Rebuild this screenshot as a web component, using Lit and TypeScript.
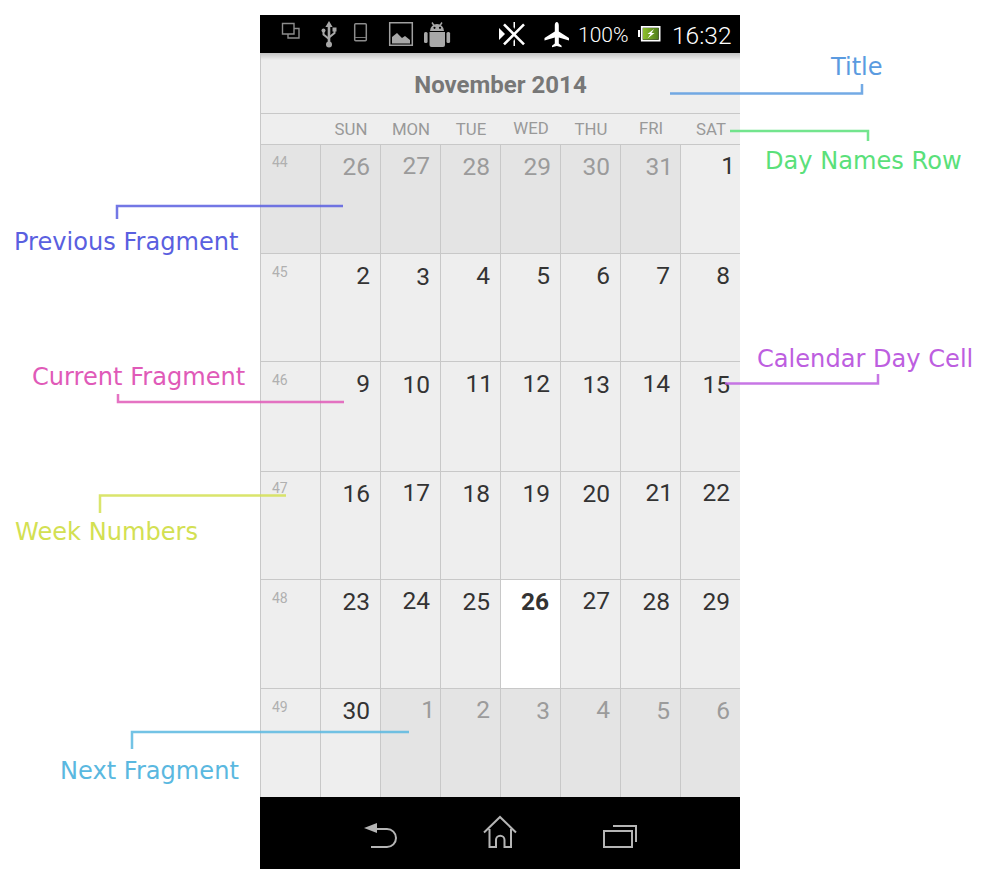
import { LitElement, html, css, svg } from "lit";
import { customElement } from "lit/decorators.js";

type Day = { n: number; other?: boolean; today?: boolean; dy?: number; dx?: number };

const names = [
  ["SUN", 0],
  ["MON", 0],
  ["TUE", 0],
  ["WED", -1],
  ["THU", 0],
  ["FRI", -1],
  ["SAT", 0],
] as const;

// week number, then seven days; dx/dy are the small shifts seen in the picture
const weeks: { no: number; dy?: number; shaded?: boolean; days: Day[] }[] = [
  {
    no: 44,
    dy: -1,
    shaded: true,
    days: [
      { n: 26, other: true },
      { n: 27, other: true, dy: -1 },
      { n: 28, other: true },
      { n: 29, other: true, dx: 1 },
      { n: 30, other: true },
      { n: 31, other: true },
      { n: 1, dy: -1, dx: 2 },
    ],
  },
  {
    no: 45,
    days: [
      { n: 2 },
      { n: 3, dy: 1 },
      { n: 4 },
      { n: 5 },
      { n: 6 },
      { n: 7 },
      { n: 8 },
    ],
  },
  {
    no: 46,
    days: [
      { n: 9 },
      { n: 10, dy: 1 },
      { n: 11 },
      { n: 12 },
      { n: 13, dy: 1 },
      { n: 14 },
      { n: 15, dy: 1 },
    ],
  },
  {
    no: 47,
    dy: -2,
    days: [
      { n: 16 },
      { n: 17, dy: -1 },
      { n: 18 },
      { n: 19 },
      { n: 20 },
      { n: 21, dy: -1 },
      { n: 22, dy: -1 },
    ],
  },
  {
    no: 48,
    days: [
      { n: 23 },
      { n: 24, dy: -1 },
      { n: 25 },
      { n: 26, today: true, dx: -1 },
      { n: 27, dy: -1 },
      { n: 28 },
      { n: 29 },
    ],
  },
  {
    no: 49,
    days: [
      { n: 30 },
      { n: 1, other: true, dy: -1, dx: 2 },
      { n: 2, other: true, dy: -1 },
      { n: 3, other: true },
      { n: 4, other: true, dy: -1 },
      { n: 5, other: true },
      { n: 6, other: true },
    ],
  },
];

const notes = [
  { text: "Title", x: 831, y: 53, color: "#5b9be0", line: "670,93.5 862,93.5 862,84" },
  { text: "Day Names Row", x: 765, y: 147, color: "#5ae07a", line: "730,131 868,131 868,141" },
  { text: "Previous Fragment", x: 14, y: 228, color: "#5a5fe0", line: "117,219 117,206 343,206" },
  { text: "Calendar Day Cell", x: 757, y: 345, color: "#bd5ee0", line: "725,383.5 878,383.5 878,374" },
  { text: "Current Fragment", x: 32, y: 363, color: "#e05ab8", line: "118,394 118,402 344,402" },
  { text: "Week Numbers", x: 15, y: 518, color: "#d3e052", line: "100,513 100,495.5 286,495.5" },
  { text: "Next Fragment", x: 60, y: 757, color: "#5ab8e0", line: "132,749 132,732 409,732" },
];

@customElement("app-root")
export class AppRoot extends LitElement {
  static styles = css`
    :host {
      display: block;
      position: relative;
      width: 983px;
      height: 882px;
      background: #fff;
      overflow: hidden;
      font-family: Roboto, sans-serif;
    }
    .phone {
      position: absolute;
      left: 260px;
      top: 15px;
      width: 480px;
      height: 854px;
      display: flex;
      flex-direction: column;
      background: #eee;
    }
    .status {
      height: 38px;
      background: #000;
      color: #fff;
      flex: none;
      display: flex;
      align-items: center;
      font-weight: 300;
    }
    .status svg {
      display: block;
      flex: none;
    }
    .pct {
      font-size: 21px;
      width: 60px;
      padding-top: 2px;
    }
    .clock {
      font-size: 24.5px;
      margin-left: 10px;
      padding-top: 2px;
    }
    .title {
      height: 60px;
      flex: none;
      box-sizing: border-box;
      display: flex;
      align-items: center;
      justify-content: center;
      padding-top: 4px;
      font-size: 24px;
      font-weight: 700;
      color: #777;
      background: linear-gradient(#c4c4c4, #eee 7px);
      border-left: 1px solid #c8c8c8;
    }
    .names {
      height: 31px;
      flex: none;
      box-sizing: border-box;
      display: grid;
      grid-template-columns: repeat(8, 60px);
      border-top: 1px solid #c8c8c8;
      border-left: 1px solid #c8c8c8;
      font-size: 16.8px;
      color: #999;
      line-height: 31px;
      text-align: center;
    }
    .grid {
      height: 653px;
      flex: none;
      display: grid;
      grid-template-columns: repeat(8, 60px);
      grid-template-rows: 109px 108px 110px 108px 109px 109px;
    }
    .cell {
      box-sizing: border-box;
      border-left: 1px solid #c8c8c8;
      border-top: 1px solid #c8c8c8;
      background: #eee;
      text-align: right;
      padding: 7px 10px 0 0;
      font-size: 24.5px;
      line-height: 30px;
      color: #333;
    }
    .cell span {
      display: block;
    }
    .other {
      background: #e4e4e4;
      color: #9b9b9b;
    }
    .today {
      background: #fff;
      font-weight: 700;
    }
    .week {
      text-align: left;
      padding: 8px 0 0 11px;
      font-size: 14px;
      line-height: 20px;
      color: #b0b0b0;
    }
    .nav {
      height: 72px;
      flex: none;
      background: #000;
    }
    .nav svg {
      display: block;
    }
    .marks {
      position: absolute;
      left: 0;
      top: 0;
      pointer-events: none;
    }
    .note {
      position: absolute;
      font-family: "DejaVu Sans", sans-serif;
      font-size: 24.1px;
      line-height: 29px;
      white-space: nowrap;
    }
  `;

  statusIcons() {
    return html`<svg width="318" height="38" viewBox="0 0 318 38" fill="none">
      <!-- overlapping screens -->
      <g stroke="#8c8c8c" stroke-width="1.4">
        <path d="M22.500 8.500h11.500v10.500h-11.500z" />
        <path d="M34 13.500h5v9.500h-11v-4" />
      </g>
      <!-- usb -->
      <g fill="#a8a8a8" stroke="#a8a8a8">
        <path d="M69 6l3.600 6h-7.200z" stroke="none" />
        <path d="M69 10v20" stroke-width="2.600" />
        <circle cx="69" cy="29.500" r="3" stroke="none" />
        <path d="M63.500 16v3.500l5.500 4.500M74.500 15v3l-5.500 4.500" stroke-width="2" fill="none" />
        <circle cx="63.500" cy="15.500" r="2" stroke="none" />
        <path d="M72.500 12.500h4v4h-4z" stroke="none" />
      </g>
      <!-- handset -->
      <rect x="94.700" y="8.700" width="11.600" height="17" rx="1" stroke="#8c8c8c" stroke-width="1.500" />
      <path d="M95 22.500h11" stroke="#777" />
      <!-- picture -->
      <path d="M129.700 7.700h22.600v22.600h-22.600z" stroke="#a0a0a0" stroke-width="1.500" />
      <path d="M132 28.500v-6.500l5-4 5 5 3-2 5 4v3.500z" fill="#a8a8a8" />
      <!-- android -->
      <g fill="#a8a8a8">
        <path d="M170 16a7 7 0 0 1 14 0z" />
        <path d="M172 7.500l2 3M182 7.500l-2 3" stroke="#a8a8a8" stroke-width="1.400" />
        <path d="M169.500 17h15.500v13a2 2 0 0 1-2 2h-11.500a2 2 0 0 1-2-2z" />
        <rect x="164" y="17" width="3.600" height="11" rx="1.500" />
        <rect x="186.500" y="17" width="3.600" height="11" rx="1.500" />
        <circle cx="174.500" cy="12.800" r="1.100" fill="#000" />
        <circle cx="180" cy="12.800" r="1.100" fill="#000" />
      </g>
      <!-- vibrate off -->
      <path d="M239 13l6 6-6 6z" fill="#fff" />
      <path d="M244 9.300l20 20M264 9.300l-20 20" stroke="#fff" stroke-width="2.600" />
      <path d="M253.500 7l1.500 0v5l-.7 2-.8-2zM253.500 31h1.500v-5l-.7-2-.8 2z" fill="#fff" />
      <!-- airplane -->
      <path
        fill="#fff"
        d="M296.800 7c1.200 0 2 1.500 2 3.500v6l10.200 6.500v2.500l-10.200-3v6l2.800 2.200v1.600l-4.800-1.300-4.800 1.300v-1.600l2.800-2.200v-6l-10.300 3V23l10.300-6.500v-6c0-2 .8-3.500 2-3.500z"
      />
    </svg>`;
  }

  battery() {
    return html`<svg width="24" height="38" viewBox="0 0 24 38" fill="none">
      <defs>
        <linearGradient id="charge" x1="0" x2="1">
          <stop offset="0" stop-color="#8fc02e" />
          <stop offset="1" stop-color="#4f7d1c" />
        </linearGradient>
      </defs>
      <path d="M0 15h2v7H0z" fill="#fff" />
      <path d="M3.800 11.800h17.800v13.800H3.800z" stroke="#fff" stroke-width="1.800" />
      <path d="M5 13h15.500v11.500H5z" fill="url(#charge)" />
      <path d="M16 14l-6.500 5h3l-3 4.500 7-5.500h-3l2.500-4z" fill="#fff" />
    </svg>`;
  }

  navIcons() {
    return html`<svg width="480" height="72" viewBox="0 0 480 72" fill="none">
      <g stroke="#b5b5b5" stroke-width="2">
        <path d="M116 32h11a9 9 0 0 1 0 18h-16" />
        <path d="M104 31l13-5v10z" fill="#b5b5b5" stroke="none" />
        <path d="M224 35.500l16-15.500 16 15.500M229.500 32v18h6.500v-7a4 4 0 0 1 8.500 0v7h6.500V32" />
        <path d="M344 34h28v16h-28z" />
        <path d="M353 29h23v16" />
      </g>
    </svg>`;
  }

  renderMarks() {
    return html`<svg class="marks" width="983" height="882" viewBox="0 0 983 882" fill="none">
      ${notes.map(
        (note) =>
          svg`<polyline points=${note.line} stroke=${note.color} stroke-width="2.500" opacity="0.85" />`
      )}
    </svg>`;
  }

  // numbers that end in 1 sit closer to the cell edge than Roboto sets them here
  offset(d: Day) {
    const dx = (d.dx ?? 0) + (d.n % 10 === 1 ? 3 : 0);
    return `transform:translate(${dx}px,${d.dy ?? 0}px)`;
  }

  render() {
    return html`
      <div class="phone">
        <div class="status">
          ${this.statusIcons()}
          <span class="pct">100%</span>
          ${this.battery()}
          <span class="clock">16:32</span>
        </div>
        <div class="title">November 2014</div>
        <div class="names">
          <span></span>
          ${names.map(
            ([name, dy]) =>
              html`<span style="transform:translateY(${dy}px)">${name}</span>`
          )}
        </div>
        <div class="grid">
          ${weeks.map(
            (week) => html`
              <div class="cell week ${week.shaded ? "other" : ""}">
                <span style="transform:translateY(${week.dy ?? 0}px)">${week.no}</span>
              </div>
              ${week.days.map(
                (d) => html`<div
                  class="cell ${d.other ? "other" : ""} ${d.today ? "today" : ""}"
                >
                  <span style=${this.offset(d)}>${d.n}</span>
                </div>`
              )}
            `
          )}
        </div>
        <div class="nav">${this.navIcons()}</div>
      </div>
      ${this.renderMarks()}
      ${notes.map(
        (note) =>
          html`<div
            class="note"
            style="left:${note.x}px;top:${note.y}px;color:${note.color}"
          >
            ${note.text}
          </div>`
      )}
    `;
  }
}
